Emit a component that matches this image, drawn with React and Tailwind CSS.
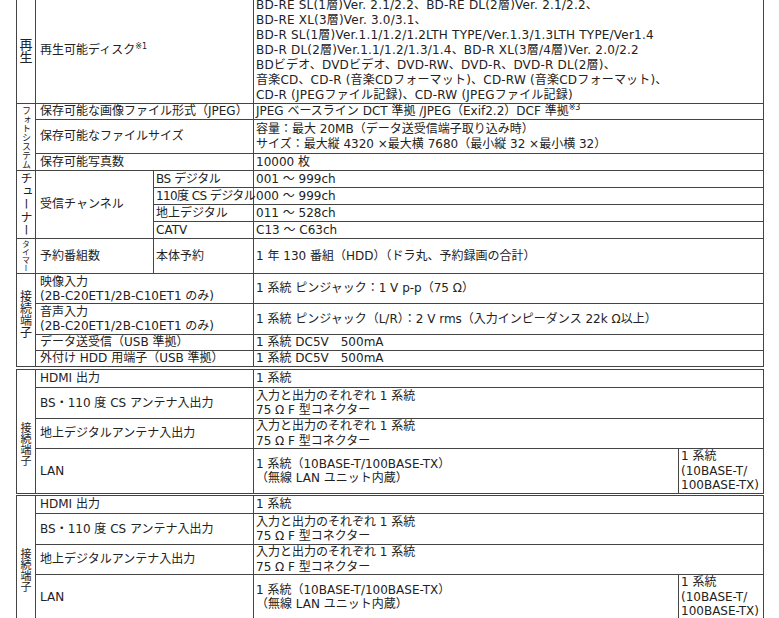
import React from "react";

const B = "border border-[#444]";
const L = `${B} pl-[4px] pr-[2px] whitespace-nowrap align-middle`;
const V = `${B} pl-[2px] pr-[2px] whitespace-nowrap align-middle`;

function Cat({ children, rowSpan = 1, text = "text-[12px]", inner = "" }) {
  return (
    <td rowSpan={rowSpan} className={`${B} p-0 align-middle`}>
      <div className={`flex justify-center ${inner}`}>
        <div
          className={`[writing-mode:vertical-rl] font-['Noto_Sans_CJK_JP',sans-serif] ${text}`}
        >
          {children}
        </div>
      </div>
    </td>
  );
}

function Sup({ children }) {
  return <sup className="text-[8px] top-[-5px]">{children}</sup>;
}

function Lower() {
  return (
    <table className="ml-[16px] w-[747px] table-fixed border-collapse">
      <colgroup>
        <col className="w-[19px]" />
        <col className="w-[218px]" />
        <col className="w-[425px]" />
        <col className="w-[85px]" />
      </colgroup>
      <tbody>
        <tr className="h-[18px]">
          <Cat rowSpan={4} text="text-[11px] leading-[12px]" inner="pt-[24px]">
            接続端子
          </Cat>
          <td className={L}>HDMI 出力</td>
          <td colSpan={2} className={V}>
            1 系統
          </td>
        </tr>
        <tr className="h-[31px]">
          <td className={L}>BS・110 度 CS アンテナ入出力</td>
          <td colSpan={2} className={`${V} leading-[14.5px]`}>
            入力と出力のそれぞれ 1 系統
            <br />
            75 Ω F 型コネクター
          </td>
        </tr>
        <tr className="h-[30px]">
          <td className={L}>地上デジタルアンテナ入出力</td>
          <td colSpan={2} className={`${V} leading-[14.5px]`}>
            入力と出力のそれぞれ 1 系統
            <br />
            75 Ω F 型コネクター
          </td>
        </tr>
        <tr className="h-[45px]">
          <td className={L}>LAN</td>
          <td className={`${V} leading-[14.5px]`}>
            1 系統（10BASE-T/100BASE-TX）
            <br />
            （無線 LAN ユニット内蔵）
          </td>
          <td className={`${V} leading-[14.5px]`}>
            1 系統
            <br />
            (10BASE-T/
            <br />
            100BASE-TX)
          </td>
        </tr>
      </tbody>
    </table>
  );
}

export default function App() {
  return (
    <div className="w-[779px] h-[618px] overflow-hidden bg-white text-[#222] text-[12px] leading-[15px] font-['DejaVu_Sans','Noto_Sans_CJK_JP',sans-serif]">
      <table className="ml-[16px] -mt-[3px] w-[747px] table-fixed border-collapse">
        <colgroup>
          <col className="w-[19px]" />
          <col className="w-[118px]" />
          <col className="w-[100px]" />
          <col className="w-[510px]" />
        </colgroup>
        <tbody>
          <tr className="h-[106px]">
            <Cat text="text-[13px] leading-[15px]">再生</Cat>
            <td colSpan={2} className={L}>
              再生可能ディスク<Sup>※1</Sup>
            </td>
            <td className={`${V} tracking-[0.2px]`}>
              BD-RE SL(1層)Ver. 2.1/2.2、BD-RE DL(2層)Ver. 2.1/2.2、
              <br />
              BD-RE XL(3層)Ver. 3.0/3.1、
              <br />
              BD-R SL(1層)Ver.1.1/1.2/1.2LTH TYPE/Ver.1.3/1.3LTH TYPE/Ver1.4
              <br />
              BD-R DL(2層)Ver.1.1/1.2/1.3/1.4、BD-R XL(3層/4層)Ver. 2.0/2.2
              <br />
              BDビデオ、DVDビデオ、DVD-RW、DVD-R、DVD-R DL(2層)、
              <br />
              音楽CD、CD-R (音楽CDフォーマット)、CD-RW (音楽CDフォーマット)、
              <br />
              CD-R (JPEGファイル記録)、CD-RW (JPEGファイル記録)
            </td>
          </tr>
          <tr className="h-[16px]">
            <Cat rowSpan={3} text="text-[9px] leading-[10px]">
              フォトシステム
            </Cat>
            <td colSpan={2} className={L}>
              保存可能な画像ファイル形式（JPEG）
            </td>
            <td className={V}>
              JPEG ベースライン DCT 準拠 /JPEG（Exif2.2）DCF 準拠<Sup>※3</Sup>
            </td>
          </tr>
          <tr className="h-[34px]">
            <td colSpan={2} className={L}>
              保存可能なファイルサイズ
            </td>
            <td className={V}>
              容量：最大 20MB（データ送受信端子取り込み時）
              <br />
              サイズ：最大縦 4320 ×最大横 7680（最小縦 32 ×最小横 32）
            </td>
          </tr>
          <tr className="h-[17px]">
            <td colSpan={2} className={L}>
              保存可能写真数
            </td>
            <td className={V}>10000 枚</td>
          </tr>
          <tr className="h-[17px]">
            <Cat rowSpan={4} text="text-[12px] leading-[12px] tracking-[1px]">
              チューナー
            </Cat>
            <td rowSpan={4} className={L}>
              受信チャンネル
            </td>
            <td className={`${V} tracking-[-0.4px] pt-[1px]`}>BS デジタル</td>
            <td className={`${V} pt-[1px]`}>001 ～ 999ch</td>
          </tr>
          <tr className="h-[17px]">
            <td className={`${V} tracking-[-0.6px] pt-[1px]`}>110度 CS デジタル</td>
            <td className={`${V} pt-[1px]`}>000 ～ 999ch</td>
          </tr>
          <tr className="h-[17px]">
            <td className={`${V} pt-[1px]`}>地上デジタル</td>
            <td className={`${V} pt-[1px]`}>011 ～ 528ch</td>
          </tr>
          <tr className="h-[17px]">
            <td className={`${V} pt-[1px]`}>CATV</td>
            <td className={`${V} pt-[1px]`}>C13 ～ C63ch</td>
          </tr>
          <tr className="h-[35px]">
            <Cat text="text-[8px] leading-[9px]">タイマー</Cat>
            <td className={L}>予約番組数</td>
            <td className={V}>本体予約</td>
            <td className={V}>1 年 130 番組（HDD）（ドラ丸、予約録画の合計）</td>
          </tr>
          <tr className="h-[30px]">
            <Cat rowSpan={4} text="text-[12px] leading-[13px]" inner="pb-[12px]">
              接続端子
            </Cat>
            <td colSpan={2} className={`${L} pl-[3px] leading-[14px]`}>
              映像入力
              <br />
              (2B-C20ET1/2B-C10ET1 のみ)
            </td>
            <td className={V}>1 系統 ピンジャック：1 V p-p（75 Ω）</td>
          </tr>
          <tr className="h-[31px]">
            <td colSpan={2} className={`${L} pl-[3px] leading-[14px]`}>
              音声入力
              <br />
              (2B-C20ET1/2B-C10ET1 のみ)
            </td>
            <td className={V}>
              1 系統 ピンジャック（L/R）：2 V rms（入力インピーダンス 22k Ω以上）
            </td>
          </tr>
          <tr className="h-[15px]">
            <td colSpan={2} className={L}>
              データ送受信（USB 準拠）
            </td>
            <td className={V}>1 系統 DC5V　500mA</td>
          </tr>
          <tr className="h-[16px]">
            <td colSpan={2} className={L}>
              外付け HDD 用端子（USB 準拠）
            </td>
            <td className={V}>1 系統 DC5V　500mA</td>
          </tr>
        </tbody>
      </table>
      <div className="h-[2px]" />
      <Lower />
      <div className="h-[1px]" />
      <Lower />
    </div>
  );
}
